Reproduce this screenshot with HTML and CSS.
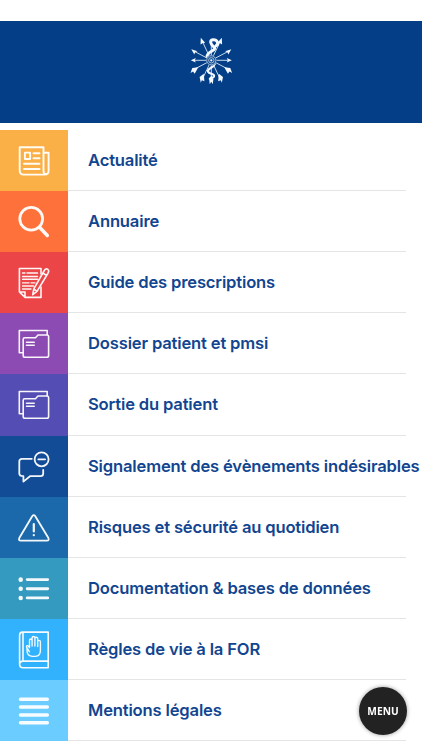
FILE: index.html
```html
<!DOCTYPE html>
<html lang="fr">
<head>
<meta charset="utf-8">
<meta name="viewport" content="width=device-width">
<title>Menu</title>
<link rel="stylesheet" href="styles.css">
</head>
<body>
<header class="header">
<svg class="logo" viewBox="0 0 64 60" aria-hidden="true">
<g transform="translate(31.3 30.3)">
<g class="rays"><path d="M-18 -9.5L18 9.5M18 -9.5L-18 9.5M-9 -19L9 19M9 -19L-9 19M-17 0H17M0 -19V19"/></g>
<g class="heads">
<path d="M-10.5 -22.5l-.3 6.8 2-1.3 2.7-.5zM10.5 -22.5l.3 6.8-2-1.3-2.7-.5zM-20 -11l3 5.2.8-2.2 2.4-1zM20 -11l-3 5.2-.8-2.2-2.4-1zM-20.5 0l5-2.2-1 2.2 1 2.2zM20.5 0l-5-2.2 1 2.2-1 2.2z"/>
<path d="M-7.5 13.5l-4.2 3.2 1.2 5.7 1-2.5 2.6 1.1zM7.5 13.5l4.2 3.2-1.2 5.7-1-2.5-2.6 1.1zM-13 7l-6 .7-1.8 5 2.5-1.5 1.7 2.3zM13 7l6 .7 1.8 5-2.5-1.5-1.7 2.3zM0 15l-2.1 4 .5 5L0 21.5 1.4 24l.7-5z"/>
</g>
<path class="snake" d="M4.7 -14.5C8 -16.5 6 -21 1.5 -20.5C-2 -20 -.8 -16.2 2.4 -13.5C6.5 -9.5 -5 -9 -4.2 -3.5"/>
<path class="snake thin" d="M3.5 3.5C2 8 -4.5 8 -3.2 11.5C-2 14 3.5 13 2.7 16C2 18 -1 17 -1.5 18.5"/>
<circle class="disc" r="5.3"/><circle class="ring" r="4.6"/><circle class="ring" r="2.7"/><circle class="dot" r="1.1"/>
</g>
</svg>
</header>
<nav class="list">
<a class="row"><span class="tile news"><svg viewBox="0 0 68 61"><path class="w17" d="M43.5 41V17.2H19.7V40.5Q19.7 44.6 23.8 44.6H44.8Q48.6 44.6 48.6 40.8V22.8H43.5V41Q43.5 44.2 46.3 44.2M24.9 22.6H30.1V29H24.9zM33.5 23.2H39.5M33.5 28.3H39.5M24 33.8H39.5M24 39H39.5"/></svg></span><span class="label">Actualité</span></a>
<a class="row"><span class="tile search"><svg viewBox="0 0 68 61"><circle class="w25" cx="31.2" cy="27.7" r="11.4"/><path class="w35" d="M40 36.8L47.3 44.5"/></svg></span><span class="label">Annuaire</span></a>
<a class="row"><span class="tile guide"><svg viewBox="0 0 68 61"><path class="w13" d="M41 22V16.5H19.4V40L25 45.4H41V35M19.4 40H25V45.4M20 40.5L25 45"/><path class="w12" d="M22.5 21H25M27 21H37.5M22.5 24.5H37.5M22.5 27.2H37.5M22.5 30.8H29M31 30.8H35M22.5 34H33.5M22.5 37H31"/><path class="pencil w13" d="M32.7 42.7L33.8 36.8L44 19Q46 15.8 48 17.5Q49.5 19 47.8 21.5L37 39.3zM42.8 21L46.7 23.5M33.8 36.8L37 39.3"/></svg></span><span class="label">Guide des prescriptions</span></a>
<a class="row"><span class="tile folder"><svg viewBox="0 0 68 61"><path class="w13" d="M22.5 39.7H19.3V17.5H47.2V21.5M24.7 24.7H35.5L38 22H47Q48.6 22 48.6 23.6V42.4Q48.6 44.2 46.8 44.2H25Q23.2 44.2 23.2 42.4V26.2Q23.2 24.7 24.7 24.7zM26.5 29.2H34.2M26.5 32.2H34.2"/></svg></span><span class="label">Dossier patient et pmsi</span></a>
<a class="row"><span class="tile exit"><svg viewBox="0 0 68 61"><path class="w13" d="M22.5 39.7H19.3V17.5H47.2V21.5M24.7 24.7H35.5L38 22H47Q48.6 22 48.6 23.6V42.4Q48.6 44.2 46.8 44.2H25Q23.2 44.2 23.2 42.4V26.2Q23.2 24.7 24.7 24.7zM26.5 29.2H34.2M26.5 32.2H34.2"/></svg></span><span class="label">Sortie du patient</span></a>
<a class="row"><span class="tile report"><svg viewBox="0 0 68 61"><path class="w15" d="M31.8 22.8H22Q19.3 22.8 19.3 25.5V37.5Q19.3 40.2 23.4 40.2V45.6L30 40.2H40.6Q43.2 40.2 43.2 37.5V33.8M38.3 23.3H45.1"/><circle class="w15" cx="41.6" cy="23.3" r="7"/></svg></span><span class="label">Signalement des évènements indésirables</span></a>
<a class="row"><span class="tile risk"><svg viewBox="0 0 68 61"><path class="w15" d="M32.2 19.2Q33.8 17.2 35.3 19.2L48.4 41Q49.4 43.6 46.8 43.6H20.8Q18.2 43.6 19.3 41z"/><path class="w2" d="M33.8 27V34.5M33.8 38.1v.1"/></svg></span><span class="label">Risques et sécurité au quotidien</span></a>
<a class="row"><span class="tile docs"><svg viewBox="0 0 68 61"><path class="w28" d="M27.2 21.6H47.7M27.2 30.7H47.7M27.2 39.9H47.7"/><path class="w4" d="M20.7 21.6v.1M20.7 30.7v.1M20.7 39.9v.1"/></svg></span><span class="label">Documentation &amp; bases de données</span></a>
<a class="row"><span class="tile rules"><svg viewBox="0 0 68 61"><path class="w13" d="M48.2 42.1V13.1H22.5Q19.6 13.1 19.6 16.5V45Q19.6 48.8 23 48.8H48.2V42.1H23Q19.6 42.1 19.6 45.5M23 13.5V42M48.2 41.5V48.5"/><path class="w12" transform="translate(0 -.5)" d="M29.5 33.3L26.7 28.8Q26 26.8 27.8 27.1L29.5 29V22Q29.5 20.5 30.9 20.5Q32.1 20.5 32.1 22V27.5V19.5Q32.1 18 33.5 18Q34.9 18 34.9 19.5V27.5V20Q34.9 18.7 36.2 18.7Q37.7 18.7 37.7 20.2V28V23Q37.7 21.8 39 21.8Q40.4 21.8 40.4 23.3V32Q40.4 37.5 35.4 37.8H32.5Q27 37.6 27 32V29"/></svg></span><span class="label">Règles de vie à la FOR</span></a>
<a class="row"><span class="tile legal"><svg viewBox="0 0 68 61"><path class="w35" d="M20.5 19.3H47.3M20.5 27.1H47.3M20.5 34.9H47.3M20.5 42.7H47.3"/></svg></span><span class="label">Mentions légales</span></a>
</nav>
<button class="menu">MENU</button>
</body>
</html>
```
FILE: styles.css
```css
* { box-sizing: border-box; }
body { margin: 0; padding-top: 20.6px; height: 750px; overflow: hidden; background: #fff; font-family: Inter, sans-serif; }
.header { height: 102px; background: #043e87; display: flex; justify-content: center; padding-top: 9.4px; }
.logo { width: 64px; height: 60px; margin-left: 2px; flex: none; }
.rays { fill: none; stroke: #dceaf7; stroke-width: .9; }
.heads, .dot { fill: #f3f9ff; }
.snake { fill: none; stroke: #f3f9ff; stroke-width: 3; stroke-linecap: round; }
.thin { stroke-width: 2.2; }
.disc { fill: #174c8d; }
.ring { fill: none; stroke: #a9c5e2; stroke-width: .9; }
.list { margin-top: 7.5px; }
.row { display: grid; grid-template-columns: 68px 1fr; height: 61.1px; color: #124590; position: relative; }
.row::after { content: ""; position: absolute; left: 68px; right: 16px; bottom: 0; height: 1px; background: #e5e5e5; }
.tile svg { display: block; width: 68px; height: 61px; fill: none; stroke: #fff; stroke-opacity: .95; stroke-linecap: round; stroke-linejoin: round; }
.label { padding-left: 20px; font-size: 16.6px; font-weight: 640; line-height: 60px; letter-spacing: -.17px; white-space: nowrap; }
.news { background: #fbb047; }
.search { background: #fe713b; }
.guide { background: #ec4548; }
.folder { background: #8b4bb3; }
.exit { background: #544db3; }
.report { background: #124b96; }
.risk { background: #1b69aa; }
.docs { background: #359abf; }
.rules { background: #32b2fd; }
.legal { background: #6bcdff; }
.pencil { fill: #ec4548; }
.w12 { stroke-width: 1.35; }
.w13 { stroke-width: 1.6; }
.w15 { stroke-width: 1.8; }
.w17 { stroke-width: 1.9; }
.w2 { stroke-width: 2.2; }
.w25 { stroke-width: 2.8; }
.w28 { stroke-width: 2.9; }
.w35 { stroke-width: 3.5; }
.w4 { stroke-width: 4.5; }
.menu { position: fixed; right: 15px; bottom: 15px; width: 48px; height: 48px; border: 0; border-radius: 50%; padding: 0; background: #222; color: #fff; font: 700 10.2px "Open Sans", sans-serif; box-shadow: 0 0 4px rgba(0, 0, 0, .4); }
```
